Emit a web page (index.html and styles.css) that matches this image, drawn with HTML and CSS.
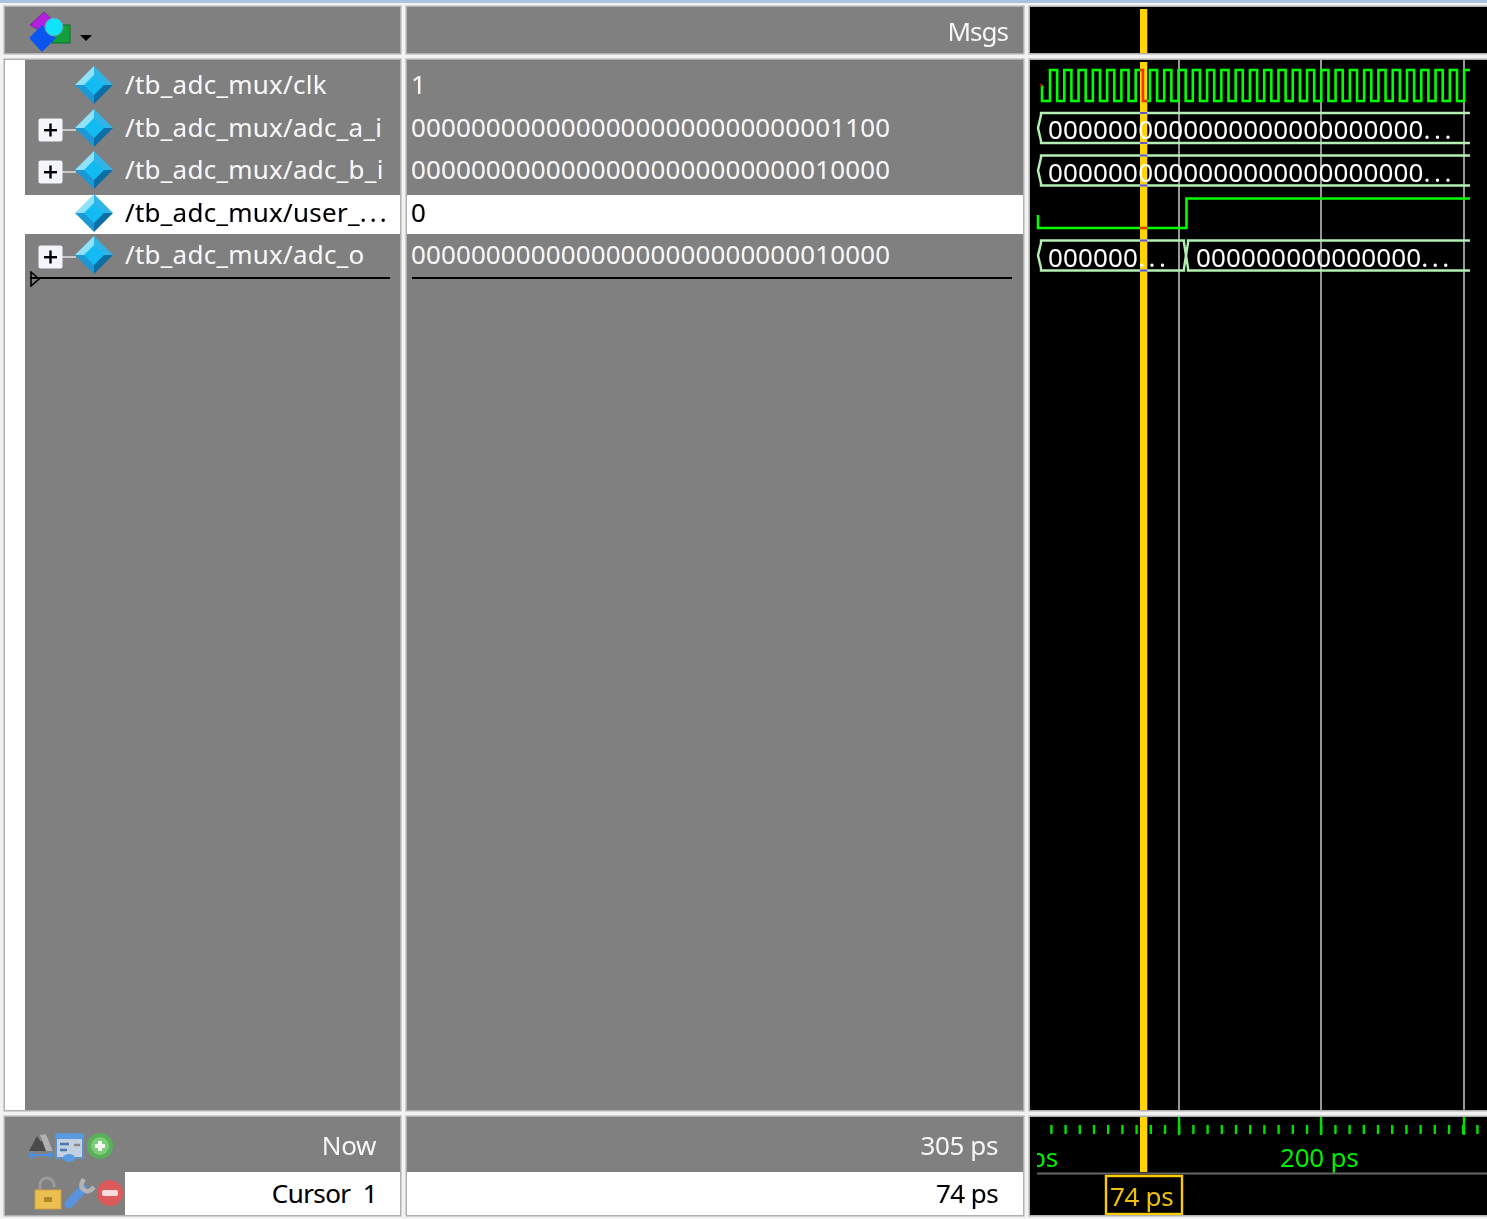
FILE: index.html
```html
<!DOCTYPE html>
<html lang="en">
<head>
<meta charset="utf-8">
<title>Wave</title>
<link rel="stylesheet" href="styles.css">
</head>
<body>
<svg class="defs" width="0" height="0" aria-hidden="true">
  <symbol id="sig" viewBox="0 0 38 38">
    <polygon points="19,0 38,19 19,19" fill="#2fb4e8"/>
    <polygon points="19,0 0,19 19,19" fill="#8fe2fb"/>
    <polygon points="0,19 19,38 19,19" fill="#1c98d6"/>
    <polygon points="38,19 19,38 19,19" fill="#0b6ea6"/>
    <polygon points="19,9 29,19 19,29 9,19" fill="#12bcf2"/>
  </symbol>
  <symbol id="expand" viewBox="0 0 38 24">
    <rect x="24" y="11" width="14" height="2" fill="#c8c8c8"/>
    <rect x="0.5" y="0.5" width="24" height="23" rx="2" fill="#f4f4fb"/>
    <rect x="6" y="11" width="13" height="2.4" fill="#000"/>
    <rect x="11.3" y="5.5" width="2.4" height="13" fill="#000"/>
  </symbol>
</svg>
<main class="app">
  <div class="cell head head-names">
    <svg class="layer-icon" width="66" height="42" viewBox="0 0 66 42">
      <polygon points="0,13 14,0 24,9 12,20" fill="#b41ee0" stroke="#7a2a90"/>
      <rect x="22" y="13" width="18" height="18" fill="#12a03c" stroke="#0c7030"/>
      <polygon points="12,13 26,26 12,40 -1,26" fill="#0a55f0"/>
      <circle cx="24" cy="15" r="9" fill="#10e4fa" stroke="#6aa0a8"/>
      <polygon points="50,23 62,23 56,29" fill="#000"/>
    </svg>
  </div>
  <div class="cell head head-msgs">Msgs</div>
  <div class="cell head head-wave">
    <svg class="fill" viewBox="1030 7 457 46"><rect class="cursor" x="1140" y="9" width="7.3" height="44"/></svg>
  </div>

  <div class="cell names">
    <ul class="rows">
      <li class="row"><svg class="sig"><use href="#sig"/></svg><span>/tb_adc_mux/clk</span></li>
      <li class="row"><svg class="exp"><use href="#expand"/></svg><svg class="sig"><use href="#sig"/></svg><span>/tb_adc_mux/adc_a_i</span></li>
      <li class="row"><svg class="exp"><use href="#expand"/></svg><svg class="sig"><use href="#sig"/></svg><span>/tb_adc_mux/adc_b_i</span></li>
      <li class="row selected"><svg class="sig"><use href="#sig"/></svg><span>/tb_adc_mux/user_<span class="dots">...</span></span></li>
      <li class="row"><svg class="exp"><use href="#expand"/></svg><svg class="sig"><use href="#sig"/></svg><span>/tb_adc_mux/adc_o</span></li>
    </ul>
    <div class="insert insert-names"></div>
    <svg class="marker" width="10" height="16" viewBox="0 0 10 16"><polygon points="1,1 9,8 1,15" fill="none" stroke="#000" stroke-width="1.6"/></svg>
  </div>
  <div class="cell values">
    <ul class="rows">
      <li class="row val">1</li>
      <li class="row val">00000000000000000000000000001100</li>
      <li class="row val">00000000000000000000000000010000</li>
      <li class="row val selected">0</li>
      <li class="row val">00000000000000000000000000010000</li>
    </ul>
    <div class="insert insert-values"></div>
  </div>
  <div class="cell wave">
    <svg class="fill" viewBox="1030 60 457 1050">
      <g class="grid">
        <line x1="1179" y1="60" x2="1179" y2="1110"/>
        <line x1="1321" y1="60" x2="1321" y2="1110"/>
        <line x1="1464" y1="60" x2="1464" y2="1110"/>
      </g>
      <rect class="cursor" x="1140" y="62" width="7.3" height="1048"/>
      <g class="sigline">
        <path d="M1042 85V101H1050V70
          h7.14V101h7.14V70h7.14V101h7.14V70h7.14V101h7.14V70h7.14V101h7.14V70h7.14V101h7.14V70
          h7.14V101h7.14V70h7.14V101h7.14V70h7.14V101h7.14V70h7.14V101h7.14V70h7.14V101h7.14V70
          h7.14V101h7.14V70h7.14V101h7.14V70h7.14V101h7.14V70h7.14V101h7.14V70h7.14V101h7.14V70
          h7.14V101h7.14V70h7.14V101h7.14V70h7.14V101h7.14V70h7.14V101h7.14V70h7.14V101h7.14V70
          h7.14V101h7.14V70h7.14V101h7.14V70h7.14V101h7.14V70h7.14V101h7.14V70h7.14V101h7.14V70
          h7.14V101h7.14V70h7.14V101h7.14V70h7.14V101h7.14V70h7.14V101h7.14V70H1470"/>
        <path d="M1038 215V228H1186.5V198.5H1470"/>
      </g>
      <g class="redline">
        <path d="M1140 70H1143V101H1147.3"/>
        <path d="M1140 228H1147.3"/>
      </g>
      <circle cx="1041" cy="85" r="1.5" fill="#c00000"/>
      <g class="bus">
        <path d="M1470 113H1041V115L1038 128L1041 141V143H1470"/>
        <path d="M1470 155.500H1041V157.500L1038 170.500L1041 183.500V185.500H1470"/>
        <path d="M1041 240.500V243L1038 255.500L1041 268V270.500H1184V268L1186 255.500L1184 243V240.500Z"/>
        <path d="M1470 240.500H1188V243L1186 255.500L1188 268V270.500H1470"/>
      </g>
      <g class="busmark">
        <path d="M1140 113H1147.3M1140 143H1147.3M1140 155.500H1147.3M1140 185.500H1147.3M1140 240.500H1147.3M1140 270.500H1147.3"/>
      </g>
      <text class="wave-text" x="1048" y="139">0000000000000000000000000<tspan class="wave-dots">...</tspan></text>
      <text class="wave-text" x="1048" y="182">0000000000000000000000000<tspan class="wave-dots">...</tspan></text>
      <text class="wave-text" x="1048" y="267">000000<tspan class="wave-dots">...</tspan></text>
      <text class="wave-text" x="1196" y="267">000000000000000<tspan class="wave-dots">...</tspan></text>
    </svg>
  </div>

  <div class="cell foot foot-names">
    <div class="foot-row now">
      <svg class="tools" width="90" height="32" viewBox="0 0 90 32">
        <polygon points="2,20 10,5 14,11 19,3 26,20" fill="#4a4a4a"/>
        <polygon points="13,4 19,3 26,20 19,20" fill="#b0b0b0"/>
        <path d="M2 24H26M2 24l4-3M2 24l4 3M26 24l-4-3M26 24l-4 3" stroke="#4a90e0" stroke-width="2" fill="none"/>
        <rect x="29" y="3" width="27" height="24" fill="#c4cfdf" stroke="#5a92d0" stroke-width="2"/>
        <rect x="29" y="3" width="27" height="5" fill="#5a9ae0"/>
        <path d="M33 13H42M33 19H40" stroke="#4a78b0" stroke-width="2.500"/>
        <path d="M47 14H53" stroke="#8a8a8a" stroke-width="2.500"/>
        <ellipse cx="42" cy="27" rx="6" ry="4" fill="#5a9ae0"/>
        <circle cx="73" cy="15" r="13" fill="#58b058"/>
        <circle cx="73" cy="15" r="9" fill="#7ccc7c"/>
        <path d="M73 10V20M68 15H78" stroke="#eef8ee" stroke-width="4"/>
      </svg>
      <span>Now</span>
    </div>
    <div class="foot-row cursor-row">
      <svg class="tools tools-2" width="91" height="36" viewBox="0 0 91 36">
        <path d="M6 14V9a7 7 0 0 1 14 0v2" fill="none" stroke="#9a9a9a" stroke-width="3"/>
        <rect x="1" y="14" width="26" height="19" fill="#ecc050" stroke="#d0a040"/>
        <rect x="10" y="21" width="8" height="5" fill="#b08828"/>
        <path d="M35 28L49 13" stroke="#5a92dc" stroke-width="9" stroke-linecap="round"/>
        <path d="M50 3Q44 12 52 15Q56 16 60 11" fill="none" stroke="#b4b4b4" stroke-width="4.500"/>
        <circle cx="76" cy="17" r="13" fill="#dc5a5a"/>
        <rect x="68" y="14" width="16" height="6" rx="2" fill="#f8dcdc"/>
      </svg>
      <div class="cursor-name">Cursor&nbsp;&nbsp;1</div>
    </div>
  </div>
  <div class="cell foot foot-values">
    <div class="foot-row now"><span>305 ps</span></div>
    <div class="foot-row cursor-row"><div class="cursor-name">74 ps</div></div>
  </div>
  <div class="cell foot foot-wave">
    <svg class="fill" viewBox="1030 1117 457 98">
      <g class="ruler">
        <line class="minor" x1="1050.200" y1="1129.500" x2="1487" y2="1129.500"/>
        <path class="major" d="M1179 1117V1135M1321 1117V1135M1464 1117V1135"/>
      </g>
      <rect class="cursor" x="1140" y="1117" width="7.3" height="55"/>
      <svg x="1037" y="1140" width="450" height="33" viewBox="1037 1140 450 33">
        <text class="ruler-text" x="1030" y="1167">ps</text>
        <text class="ruler-text" x="1280" y="1167">200 ps</text>
      </svg>
      <line class="ruler-base" x1="1037" y1="1173.500" x2="1487" y2="1173.500"/>
      <rect class="cursor-box" x="1106" y="1176" width="76" height="38"/>
      <text class="cursor-text" x="1110" y="1206">74 ps</text>
    </svg>
  </div>
</main>
</body>
</html>
```

FILE: styles.css
```css
html, body {
  margin: 0;
  padding: 0;
  background: #f2f2f2;
}

body {
  width: 1487px;
  height: 1219px;
  overflow: hidden;
  font-family: "Noto Sans", "Open Sans", sans-serif;
  font-size: 26px;
  color: #f6f6f6;
}

.defs {
  position: absolute;
}

.app {
  display: grid;
  grid-template-columns: 395px 616px 457px;
  grid-template-rows: 46px 1050px 98px;
  gap: 7px;
  padding: 4px 0 0 5px;
  border-top: 3px solid #a9c3e0;
  filter: blur(0.7px);
}

.cell {
  background: #808080;
  position: relative;
  min-width: 0;
  box-shadow: 0 0 0 1.5px #b0b0b0;
}

.fill {
  display: block;
  width: 100%;
  height: 100%;
}

.head-msgs {
  display: flex;
  align-items: center;
  justify-content: flex-end;
  padding-right: 15px;
  padding-top: 1px;
  letter-spacing: -1px;
}

.head-names {
  display: flex;
  padding: 5px 0 0 25px;
}

.head-wave,
.wave,
.foot-wave {
  background: #000;
}

.names {
  background: #fff;
  padding-left: 20px;
  background-image: linear-gradient(#808080, #808080);
  background-repeat: no-repeat;
  background-position: 20px 0;
}

.rows {
  list-style: none;
  margin: 0;
  padding: 4px 0 0;
}

.row {
  height: 42.5px;
  box-sizing: border-box;
  display: flex;
  align-items: center;
  position: relative;
  padding-left: 100px;
  padding-bottom: 2px;
  white-space: nowrap;
  letter-spacing: 0.25px;
  text-shadow: 0.7px 0 rgba(255, 190, 120, 0.3), -0.7px 0 rgba(120, 170, 255, 0.3);
}

.dots {
  letter-spacing: 3px;
}

.row.val {
  padding-left: 4px;
  letter-spacing: 0.1px;
}

.selected {
  color: #000;
  background: linear-gradient(#fff, #fff) 0 100% / 100% 39px no-repeat;
}

.sig {
  position: absolute;
  left: 50px;
  top: 2px;
  width: 38px;
  height: 38px;
}

.exp {
  position: absolute;
  left: 13px;
  top: 11px;
  width: 38px;
  height: 24px;
}

.insert {
  height: 2px;
  background: #000;
  margin-top: 0.5px;
}

.insert-names {
  margin-left: 5px;
  margin-right: 10px;
}

.insert-values {
  margin-left: 5px;
  margin-right: 11px;
}

.marker {
  position: absolute;
  left: 25px;
  top: 211px;
}

.grid line {
  stroke: #a8a8a8;
  stroke-width: 1.8;
}

.cursor {
  fill: #ffd400;
}

.sigline path {
  fill: none;
  stroke: #00ff00;
  stroke-width: 2.6;
}

.redline path {
  fill: none;
  stroke: #ff3000;
  stroke-width: 2.4;
}

.bus path {
  fill: none;
  stroke: #b4f0b4;
  stroke-width: 2.4;
}

.busmark path {
  fill: none;
  stroke: #7050c0;
  stroke-width: 2;
}

.wave-text {
  font-family: "Noto Sans", "Open Sans", sans-serif;
  font-size: 26px;
  letter-spacing: 0.15px;
  fill: #ffffff;
}

.wave-dots {
  letter-spacing: 3.5px;
}

.foot {
  display: flex;
  flex-direction: column;
}

.foot-wave {
  display: block;
}

.foot-row {
  display: flex;
  align-items: center;
  justify-content: flex-end;
}

.now {
  height: 55px;
  padding-right: 25px;
}

.foot-names .now {
  padding-right: 24px;
  position: relative;
}

.foot-names .now span,
.foot-values .now span {
  letter-spacing: -0.4px;
}

.cursor-row {
  height: 43px;
  color: #000;
}

.foot-names .cursor-row {
  justify-content: space-between;
}

.foot-values .now,
.foot-values .cursor-name {
  padding-right: 25px;
}

.foot-values .cursor-name {
  width: 100%;
  box-sizing: border-box;
}

.cursor-name {
  background: #fff;
  height: 43px;
  line-height: 43px;
  text-align: right;
  flex: 1;
  padding-right: 23px;
  letter-spacing: -0.6px;
  text-shadow: 0.7px 0 rgba(255, 190, 120, 0.3), -0.7px 0 rgba(120, 170, 255, 0.3);
}

.tools {
  position: absolute;
  left: 22px;
  top: 14px;
}

.tools-2 {
  position: static;
  margin-left: 29px;
  flex: none;
}

.ruler .minor {
  stroke: #00e000;
  stroke-width: 9;
  stroke-dasharray: 2.4 11.8;
}

.ruler .major {
  stroke: #00e000;
  stroke-width: 2.4;
  fill: none;
}

.ruler-text {
  font-family: "Noto Sans", "Open Sans", sans-serif;
  font-size: 26px;
  letter-spacing: -0.2px;
  fill: #00f000;
}

.ruler-base {
  stroke: #666666;
  stroke-width: 2;
}

.cursor-box {
  fill: none;
  stroke: #ffcc00;
  stroke-width: 2.4;
}

.cursor-text {
  font-family: "Noto Sans", "Open Sans", sans-serif;
  font-size: 26px;
  letter-spacing: -0.3px;
  fill: #f0c010;
}
```
